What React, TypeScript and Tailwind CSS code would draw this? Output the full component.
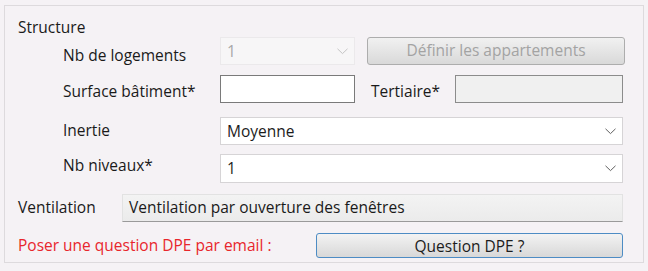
import React from 'react';

const font = { fontFamily: '"Segoe UI", "Open Sans", "Noto Sans", sans-serif' };

function Chevron({ disabled }: { disabled?: boolean }) {
  return (
    <svg width="11" height="7" viewBox="0 0 11 7" className="shrink-0">
      <path
        d="M0.5 0.8 L5.5 5.6 L10.5 0.8"
        fill="none"
        stroke={disabled ? '#c4c4c4' : '#606060'}
        strokeWidth="1"
      />
    </svg>
  );
}

function Select({
  value,
  disabled,
  className,
}: {
  value: string;
  disabled?: boolean;
  className: string;
}) {
  return (
    <div
      className={
        'flex items-center justify-between pl-[6px] pr-[6px] ' +
        (disabled
          ? 'bg-[#f7f6f7] border border-[#ebe9eb] text-[#a8a8a8] '
          : 'bg-white border border-[#d6d4d6] text-[#1c1c1c] ') +
        className
      }
    >
      <span className="pt-[1px]">{value}</span>
      <Chevron disabled={disabled} />
    </div>
  );
}

export default function App() {
  return (
    <div
      className="w-[648px] h-[271px] bg-[#f5f2f5] pt-[5px] px-[4px] text-[15.5px] text-[#1a1a1a]"
      style={font}
    >
      <div className="h-[258px] border border-[#dddadd] w-[640px]">
        <div className="pt-[11px] pl-[13px] leading-[20px]">Structure</div>

        {/* Nb de logements */}
        <div className="flex items-center h-[28px] pl-[58px]">
          <div className="w-[157px] mt-[10px]">Nb de logements</div>
          <Select value="1" disabled className="w-[135px] h-[28px]" />
          <button className="ml-[12px] w-[258px] h-[28px] rounded-[3px] border border-[#adadad] bg-gradient-to-b from-[#f1f1f1] to-[#d9d9d9] text-[#a3a3a3]">
            Définir les appartements
          </button>
        </div>

        {/* Surface */}
        <div className="flex items-center h-[28px] mt-[10px] pl-[58px]">
          <div className="w-[157px] mt-[6px]">Surface bâtiment*</div>
          <div className="w-[135px] h-[28px] bg-white border border-[#7a7a7a]" />
          <div className="w-[100px] pl-[16px] mt-[6px]">Tertiaire*</div>
          <div className="w-[168px] h-[28px] bg-[#f0f0f0] border border-[#8c8c8c]" />
        </div>

        {/* Inertie */}
        <div className="flex items-center h-[28px] mt-[14px] pl-[58px]">
          <div className="w-[157px]">Inertie</div>
          <Select value="Moyenne" className="w-[403px] h-[28px]" />
        </div>

        {/* Nb niveaux */}
        <div className="flex items-center h-[29px] mt-[9px] pl-[58px]">
          <div className="w-[157px] -mt-[6px]">Nb niveaux*</div>
          <Select value="1" className="w-[403px] h-[29px]" />
        </div>

        {/* Ventilation */}
        <div className="flex items-center h-[28px] mt-[11px] pl-[13px]">
          <div className="w-[104px]">Ventilation</div>
          <div className="w-[501px] h-[28px] flex items-center pl-[6px] bg-gradient-to-b from-[#f3f3f3] to-[#ebebeb] border border-[#e2e2e2] border-b-[#9a9a9a]">
            Ventilation par ouverture des fenêtres
          </div>
        </div>

        {/* Question DPE */}
        <div className="flex items-center h-[25px] mt-[11px] pl-[13px]">
          <div className="w-[298px] text-[#e8262c]">Poser une question DPE par email :</div>
          <button className="w-[307px] h-[25px] rounded-[3px] border border-[#4d8cc4] bg-gradient-to-b from-[#f3f3f3] to-[#d8d8d8] text-[#1c1c1c] leading-[20px]">
            Question DPE ?
          </button>
        </div>
      </div>
    </div>
  );
}
